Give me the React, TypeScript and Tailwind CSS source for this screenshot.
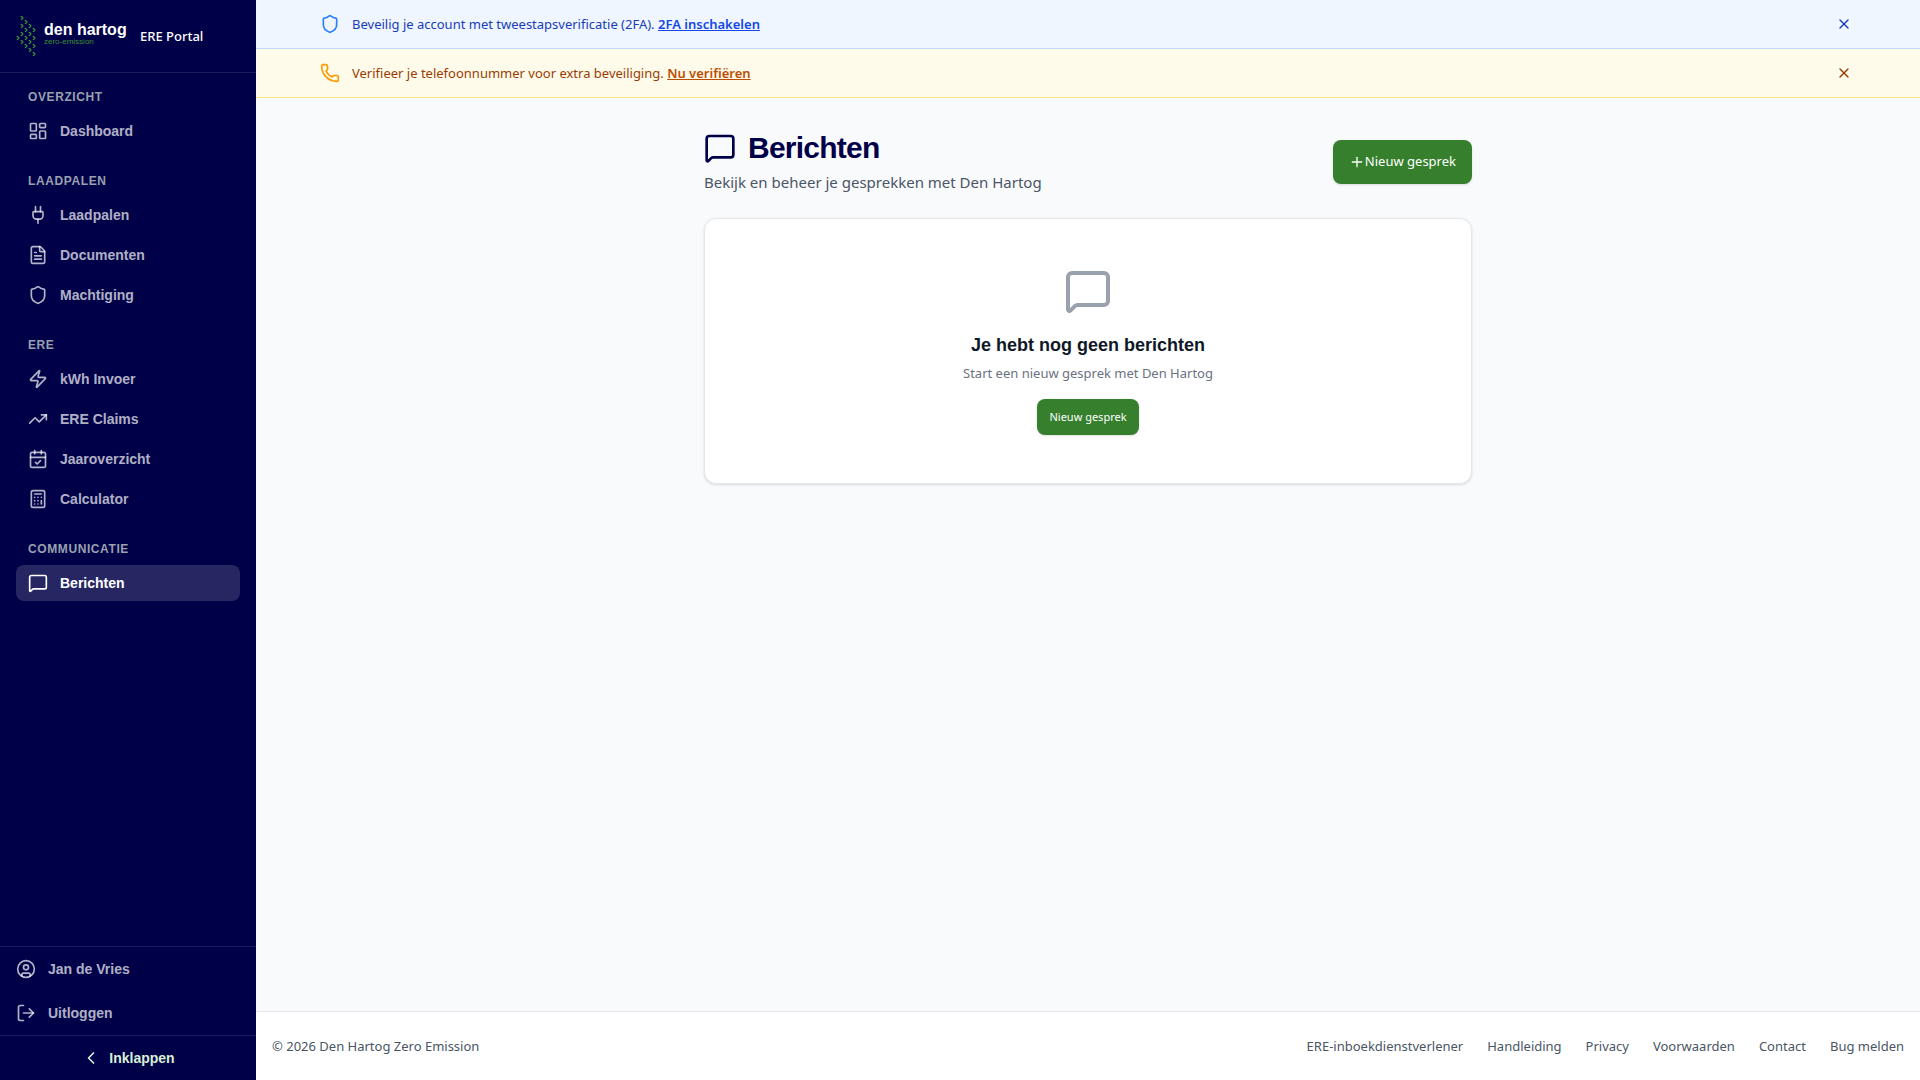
import React from "react";
import {
  Calculator,
  CalendarCheck,
  ChevronLeft,
  CircleUser,
  FileText,
  LayoutDashboard,
  LogOut,
  MessageSquare,
  Phone,
  Plug,
  Plus,
  Shield,
  TrendingUp,
  X,
  Zap,
} from "lucide-react";

const navGroups = [
  {
    title: "Overzicht",
    items: [{ label: "Dashboard", icon: LayoutDashboard }],
  },
  {
    title: "Laadpalen",
    items: [
      { label: "Laadpalen", icon: Plug },
      { label: "Documenten", icon: FileText },
      { label: "Machtiging", icon: Shield },
    ],
  },
  {
    title: "ERE",
    items: [
      { label: "kWh Invoer", icon: Zap },
      { label: "ERE Claims", icon: TrendingUp },
      { label: "Jaaroverzicht", icon: CalendarCheck },
      { label: "Calculator", icon: Calculator },
    ],
  },
  {
    title: "Communicatie",
    items: [{ label: "Berichten", icon: MessageSquare, active: true }],
  },
];

const footerLinks = [
  "ERE-inboekdienstverlener",
  "Handleiding",
  "Privacy",
  "Voorwaarden",
  "Contact",
  "Bug melden",
];

// Center points of the small chevrons in the logo
const chevrons = [
  [2, 22],
  [6, 2], [6, 10], [6, 18], [6, 26],
  [10, 6], [10, 14], [10, 22], [10, 30],
  [14, 10], [14, 18], [14, 26], [14, 34],
  [18, 14], [18, 22], [18, 30], [18, 38],
];

function Logo() {
  return (
    <div className="flex w-28 shrink-0 items-center gap-2">
      <svg viewBox="0 0 20 40" className="h-10 w-5 shrink-0" fill="none" stroke="#3c8f32" strokeWidth="1.2">
        {chevrons.map(([x, y]) => (
          <path key={`${x}-${y}`} d={`M${x - 1.4} ${y - 1.4}h1.2l1.2 1.4-1.2 1.4h-1`} />
        ))}
      </svg>
      <div className="pb-1 font-['Liberation_Sans',sans-serif] whitespace-nowrap">
        <div className="text-base leading-4 font-bold text-white">den hartog</div>
        <div className="text-[8px] leading-2 font-normal text-[#3c8f32]">zero-emission</div>
      </div>
    </div>
  );
}

function Sidebar() {
  return (
    <aside className="sticky top-0 flex h-screen w-64 shrink-0 flex-col bg-[#000048] font-['Liberation_Sans',sans-serif] text-sm font-bold text-white/70">
      <div className="flex h-[73px] items-center gap-3 border-b border-white/10 px-4">
        <Logo />
        <span className="font-['Noto_Sans',sans-serif] text-[13px] font-medium text-white">ERE Portal</span>
      </div>

      <nav className="flex-1 space-y-6 overflow-y-auto p-4">
        {navGroups.map((group) => (
          <div key={group.title}>
            <h3 className="mb-2 px-3 text-xs tracking-wider text-gray-400 uppercase">{group.title}</h3>
            <ul className="space-y-1">
              {group.items.map(({ label, icon: Icon, active }: any) => (
                <li key={label}>
                  <a
                    href="#"
                    className={
                      active
                        ? "flex items-center gap-3 rounded-lg bg-white/15 px-3 py-2 text-white"
                        : "flex items-center gap-3 rounded-lg px-3 py-2 hover:bg-white/10"
                    }
                  >
                    <Icon className="h-5 w-5" />
                    {label}
                  </a>
                </li>
              ))}
            </ul>
          </div>
        ))}
      </nav>

      <div className="border-t border-white/10">
        <a href="#" className="flex items-center gap-3 px-4 py-3">
          <CircleUser className="h-5 w-5" />
          Jan de Vries
        </a>
        <button className="flex w-full items-center gap-3 px-4 py-3">
          <LogOut className="h-5 w-5" />
          Uitloggen
        </button>
      </div>
      <button className="flex items-center justify-center gap-2 border-t border-white/10 py-3 text-[#d9efd6]">
        <ChevronLeft className="h-5 w-5" />
        Inklappen
      </button>
    </aside>
  );
}

export default function App() {
  return (
    <div className="flex min-h-screen bg-[#f9fafc] font-['Noto_Sans',sans-serif]">
      <Sidebar />

      <div className="flex min-w-0 flex-1 flex-col">
        {/* Security banners */}
        <div className="border-b border-blue-200 bg-blue-50">
          <div className="mx-auto flex h-12 max-w-screen-2xl items-center gap-3 text-[13px] leading-5 text-blue-800">
            <Shield className="h-5 w-5 text-blue-500" />
            <p className="flex-1">
              Beveilig je account met tweestapsverificatie (2FA).{" "}
              <a href="#" className="font-semibold text-blue-700 underline">2FA inschakelen</a>
            </p>
            <button aria-label="Sluiten" className="p-1 text-blue-800">
              <X className="h-4 w-4" />
            </button>
          </div>
        </div>
        <div className="border-b border-amber-200 bg-amber-50">
          <div className="mx-auto flex h-12 max-w-screen-2xl items-center gap-3 text-[13px] leading-5 text-amber-800">
            <Phone className="h-5 w-5 text-amber-500" />
            <p className="flex-1">
              Verifieer je telefoonnummer voor extra beveiliging.{" "}
              <a href="#" className="font-semibold text-amber-700 underline">Nu verifiëren</a>
            </p>
            <button aria-label="Sluiten" className="p-1 text-amber-800">
              <X className="h-4 w-4" />
            </button>
          </div>
        </div>

        <main className="mx-auto w-full max-w-3xl flex-1 py-8">
          <div className="mb-6 flex items-center justify-between">
            <div>
              <h1 className="flex items-center gap-3 font-['Liberation_Sans',sans-serif] text-3xl font-bold tracking-tight text-[#000048]">
                <MessageSquare className="h-8 w-8" />
                Berichten
              </h1>
              <p className="mt-1 text-[15px] leading-6 text-gray-600">Bekijk en beheer je gesprekken met Den Hartog</p>
            </div>
            <button className="flex h-11 items-center rounded-lg bg-[#357f2d] px-4 text-[13px] text-white shadow-sm">
              <Plus className="h-4 w-4" />
              Nieuw gesprek
            </button>
          </div>

          <div className="flex flex-col items-center rounded-xl border border-gray-200 bg-white py-12 shadow-sm">
            <MessageSquare className="mb-4 h-12 w-12 text-gray-400" />
            <h2 className="font-['Liberation_Sans',sans-serif] text-lg font-bold text-gray-900">
              Je hebt nog geen berichten
            </h2>
            <p className="mt-1 text-[13px] leading-5 text-gray-500">Start een nieuw gesprek met Den Hartog</p>
            <button className="mt-4 h-9 rounded-lg bg-[#357f2d] px-3 text-[11px] text-white shadow-sm">
              Nieuw gesprek
            </button>
          </div>
        </main>

        <footer className="flex items-center justify-between border-t border-gray-200 bg-white px-4 py-6 text-[13px] leading-5 text-gray-600">
          <p>© 2026 Den Hartog Zero Emission</p>
          <nav className="flex gap-6">
            {footerLinks.map((link) => (
              <a key={link} href="#">{link}</a>
            ))}
          </nav>
        </footer>
      </div>
    </div>
  );
}
